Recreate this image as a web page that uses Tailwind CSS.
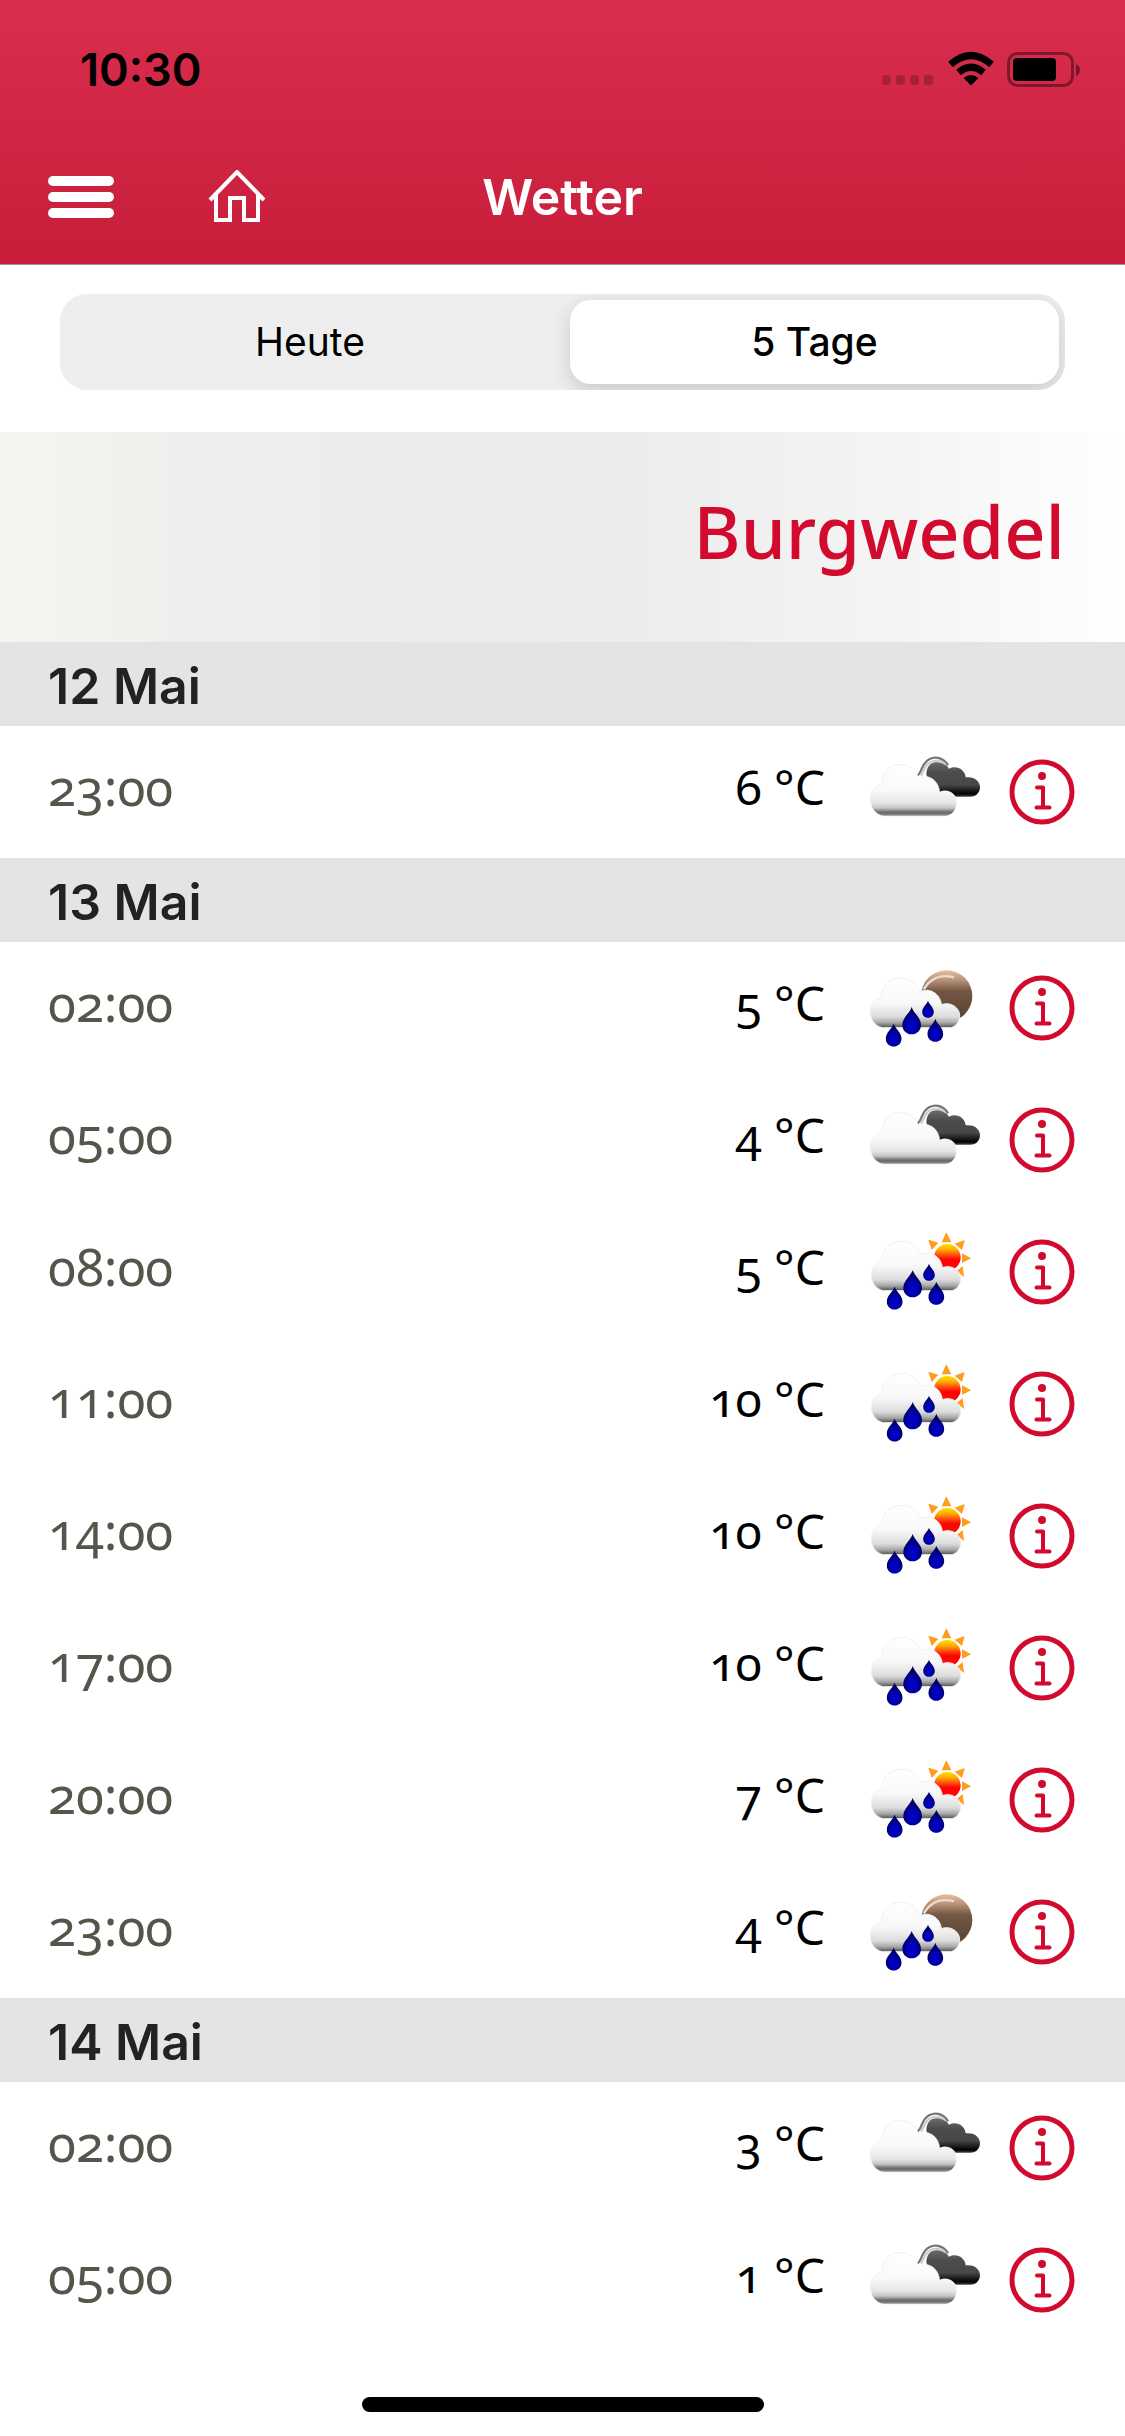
<!DOCTYPE html>
<html lang="de">
<head>
<meta charset="utf-8">
<meta name="viewport" content="width=device-width, initial-scale=1">
<title>Wetter</title>
<script src="https://cdn.jsdelivr.net/npm/@tailwindcss/browser@4"></script>
</head>
<body class="min-h-screen flex flex-col bg-white font-['Inter',sans-serif] text-black">

<!-- Shared symbols -->
<svg class="absolute size-0" aria-hidden="true">
  <defs>
    <linearGradient id="cloudFill" x1="0" y1="0" x2="0" y2="1">
      <stop offset="0" stop-color="#fff"/><stop offset=".5" stop-color="#f9f9f9"/><stop offset=".74" stop-color="#e6e6e6"/><stop offset=".84" stop-color="#c4c4c4"/><stop offset=".92" stop-color="#6a6a6a"/><stop offset=".96" stop-color="#777"/><stop offset="1" stop-color="#c8c8c8"/>
    </linearGradient>
    <linearGradient id="rainCloudFill" x1="0" y1="0" x2="0" y2="1">
      <stop offset="0" stop-color="#fff"/><stop offset=".5" stop-color="#f8f8f8"/><stop offset=".78" stop-color="#dcdcdc"/><stop offset=".9" stop-color="#a8a8a8"/><stop offset="1" stop-color="#505050"/>
    </linearGradient>
    <linearGradient id="darkFill" x1="0" y1="0" x2="0" y2="1">
      <stop offset="0" stop-color="#6a6a6a"/><stop offset=".3" stop-color="#4c4c4c"/><stop offset=".65" stop-color="#484848"/><stop offset=".92" stop-color="#000"/><stop offset="1" stop-color="#444"/>
    </linearGradient>
    <linearGradient id="moonFill" x1="0" y1="0" x2="0" y2="1">
      <stop offset="0" stop-color="#e8c0a0"/><stop offset=".2" stop-color="#b58f76"/><stop offset=".4" stop-color="#735844"/><stop offset="1" stop-color="#54402f"/>
    </linearGradient>
    <linearGradient id="sunFill" x1="0" y1="0" x2="0" y2="1">
      <stop offset="0" stop-color="#ffe000"/><stop offset=".2" stop-color="#ffb000"/><stop offset=".42" stop-color="#ff4a10"/><stop offset=".6" stop-color="#ff0000"/><stop offset="1" stop-color="#ff1010"/>
    </linearGradient>
    <radialGradient id="dropFill" cx=".5" cy=".68" r=".55">
      <stop offset="0" stop-color="#0000d0"/><stop offset=".4" stop-color="#0000b8"/><stop offset="1" stop-color="#00005c"/>
    </radialGradient>
    <path id="drop" d="M0-41C4-24 28-10 28 13C28 30 15 41 0 41S-28 30-28 13C-28-10-4-24 0-41Z" fill="url(#dropFill)"/>
    <g id="rain">
      <path d="M130 213C106 208 92 186 94 160C96 138 112 128 125 125C128 88 150 65 185 65C215 65 236 82 243 105C270 92 304 110 307 144C332 134 360 150 362 175C363 195 350 210 335 213Z" fill="url(#rainCloudFill)" stroke="#f2f2f2" stroke-width="3"/>
      <use href="#drop" x="218" y="192"/>
      <use href="#drop" transform="translate(267 158) scale(.62)"/>
      <use href="#drop" transform="translate(164 235) scale(.84)"/>
      <use href="#drop" transform="translate(289 221) scale(.84)"/>
    </g>
  </defs>
  <symbol id="cloudy" viewBox="72 12 360 288">
    <path d="M262 104C262 78 277 64 297 67C313 69 325 76 330 86C352 75 378 88 380 112C406 108 424 124 423 143C422 160 408 170 394 170L340 170L280 150Z" fill="url(#darkFill)"/>
    <path d="M233 107C252 102 242 72 272 57C294 46 318 58 327 76" fill="none" stroke="#777" stroke-width="7"/>
    <path d="M246 108C256 94 256 72 280 64C296 60 311 66 318 72" fill="none" stroke="#ccc" stroke-width="6"/>
    <path d="M135 229C108 224 91 200 93 170C95 150 112 135 130 130C130 95 153 74 183 74C210 74 228 89 238 112C268 100 300 122 302 156C328 145 355 162 353 190C352 212 338 226 320 229Z" fill="url(#cloudFill)" stroke="#fff" stroke-opacity=".5" stroke-width="3"/>
    <path d="M98 196C86 164 108 138 130 130C130 95 153 74 183 74C210 74 228 89 236 106" fill="none" stroke="#f0f0f0" stroke-width="3"/>
  </symbol>
  <symbol id="rain-night" viewBox="72 30 360 288">
    <circle cx="323" cy="138" r="77" fill="url(#moonFill)"/>
    <path d="M254 118C270 90 300 70 345 82" fill="none" stroke="#ecdccf" stroke-width="7"/>
    <g transform="translate(0 20)"><use href="#rain"/></g>
  </symbol>
  <symbol id="rain-day" viewBox="72 12 360 288">
    <g fill="#ff9c1a">
      <path d="M322 37L337 67L308 67Z"/><path d="M377 60L369 90L347 71Z"/><path d="M396 115L369 129L369 100Z"/><path d="M375 171L353 153L371 138Z"/><path d="M268 59L298 68L278 90Z"/>
    </g>
    <circle cx="325" cy="112" r="40" fill="url(#sunFill)"/>
    <g transform="translate(3 -1)"><use href="#rain"/></g>
  </symbol>
  <symbol id="info" viewBox="0 0 66 66">
    <circle cx="33" cy="33" r="30" fill="none" stroke="#d20a2d" stroke-width="5"/>
    <circle cx="33" cy="17" r="4" fill="#d20a2d"/>
    <path d="M28 28.500H34V48.500M27.500 48.500H40.500" fill="none" stroke="#d20a2d" stroke-width="4" stroke-linecap="round" stroke-linejoin="round"/>
  </symbol>
</svg>

<header class="bg-linear-to-b from-[#d92e4d] via-[#d02544] to-[#c81d3a] border-b border-[#999]">
  <div class="flex h-33 items-center justify-between pl-20 pr-[42px] pt-[6px]">
    <time class="text-[45px] leading-none font-semibold">10:30</time>
    <svg class="h-9 w-[202px]" viewBox="0 0 202 36" aria-label="WLAN verbunden, Akku geladen" role="img">
      <g fill="#000" fill-opacity=".2"><rect x="1" y="24" width="9" height="10" rx="3"/><rect x="15" y="24" width="9" height="10" rx="3"/><rect x="29" y="24" width="9" height="10" rx="3"/><rect x="43" y="24" width="9" height="10" rx="3"/></g>
      <path d="M90 34.500L82.500 27Q90 21 97.500 27Z"/>
      <path d="M77.500 21.500Q90 11 102.500 21.500" fill="none" stroke="#000" stroke-width="7"/>
      <path d="M69.500 13.500Q90-4.500 110.500 13.500" fill="none" stroke="#000" stroke-width="7"/>
      <rect x="127.500" y="2.500" width="64" height="32" rx="9" fill="none" stroke="#000" stroke-opacity=".4" stroke-width="3"/>
      <rect x="132" y="7" width="43" height="23" rx="4"/>
      <path d="M195 13Q199 15 199 19T195 25Z" fill-opacity=".45"/>
    </svg>
  </div>
  <nav class="grid h-33 grid-cols-[1fr_auto_1fr] items-center px-12 pb-[2px]">
    <div class="flex items-center gap-[94px]">
      <button type="button" aria-label="Menü" class="flex w-[66px] flex-col gap-[6px]"><span class="h-[10px] w-full rounded-full bg-white"></span><span class="h-[10px] w-full rounded-full bg-white"></span><span class="h-[10px] w-full rounded-full bg-white"></span></button>
      <a href="#" aria-label="Startseite"><svg class="h-[54px] w-[58px]" viewBox="0 0 58 54" fill="none" stroke="#fff" stroke-width="4"><path d="M2 30L29 2L56 30M8 25V50H22V28H36V50H50V25"/></svg></a>
    </div>
    <h1 class="text-[50px] leading-none font-semibold text-white">Wetter</h1>
  </nav>
</header>

<main>
  <div class="px-15 pt-[29px] pb-[42px]">
    <div class="grid h-24 grid-cols-[1fr_489px] overflow-hidden rounded-[27px] bg-[#eee] p-[6px] text-[39px]" role="group" aria-label="Zeitraum">
      <button type="button" aria-pressed="false" class="pr-4">Heute</button>
      <button type="button" aria-pressed="true" class="rounded-[21px] bg-white font-medium shadow-[0_6px_20px_rgba(0,0,0,0.16)]">5 Tage</button>
    </div>
  </div>

  <div class="flex h-[210px] items-center justify-end bg-[linear-gradient(to_right,#f7f5f0,#f0efed_15%,#ebebe9_42%,#ededed_58%,#f5f5f6_82%,#fff)] px-15 pb-3">
    <h2 class="font-['Noto_Sans',sans-serif] text-[72px] leading-none font-medium text-[#d20a2d]">Burgwedel</h2>
  </div>

  <section>
    <h3 class="flex h-21 items-center bg-[#e4e4e4] px-12 pt-1 text-[50px] font-semibold text-[#222]">12 Mai</h3>
    <ul class="font-['Noto_Sans',sans-serif] text-[48px] oldstyle-nums">
      <li class="flex h-33 items-center pl-12 pr-[50px]"><time class="flex-1 pb-3 text-[51px] text-[#55554b]">23:00</time><span class="pb-[10px]">6 °C</span><svg class="ml-[38px] h-24 w-30" role="img" aria-label="Bewölkt"><use href="#cloudy"/></svg><button type="button" aria-label="Details" class="ml-[26px]"><svg class="size-[66px]"><use href="#info"/></svg></button></li>
    </ul>
  </section>

  <section>
    <h3 class="flex h-21 items-center bg-[#e4e4e4] px-12 pt-1 text-[50px] font-semibold text-[#222]">13 Mai</h3>
    <ul class="font-['Noto_Sans',sans-serif] text-[48px] oldstyle-nums">
      <li class="flex h-33 items-center pl-12 pr-[50px]"><time class="flex-1 pb-3 text-[51px] text-[#55554b]">02:00</time><span class="pb-[10px]">5 °C</span><svg class="ml-[38px] h-24 w-30" role="img" aria-label="Regen, Nacht"><use href="#rain-night"/></svg><button type="button" aria-label="Details" class="ml-[26px]"><svg class="size-[66px]"><use href="#info"/></svg></button></li>
      <li class="flex h-33 items-center pl-12 pr-[50px]"><time class="flex-1 pb-3 text-[51px] text-[#55554b]">05:00</time><span class="pb-[10px]">4 °C</span><svg class="ml-[38px] h-24 w-30" role="img" aria-label="Bewölkt"><use href="#cloudy"/></svg><button type="button" aria-label="Details" class="ml-[26px]"><svg class="size-[66px]"><use href="#info"/></svg></button></li>
      <li class="flex h-33 items-center pl-12 pr-[50px]"><time class="flex-1 pb-3 text-[51px] text-[#55554b]">08:00</time><span class="pb-[10px]">5 °C</span><svg class="ml-[38px] h-24 w-30" role="img" aria-label="Regen und Sonne"><use href="#rain-day"/></svg><button type="button" aria-label="Details" class="ml-[26px]"><svg class="size-[66px]"><use href="#info"/></svg></button></li>
      <li class="flex h-33 items-center pl-12 pr-[50px]"><time class="flex-1 pb-3 text-[51px] text-[#55554b]">11:00</time><span class="pb-[10px]">10 °C</span><svg class="ml-[38px] h-24 w-30" role="img" aria-label="Regen und Sonne"><use href="#rain-day"/></svg><button type="button" aria-label="Details" class="ml-[26px]"><svg class="size-[66px]"><use href="#info"/></svg></button></li>
      <li class="flex h-33 items-center pl-12 pr-[50px]"><time class="flex-1 pb-3 text-[51px] text-[#55554b]">14:00</time><span class="pb-[10px]">10 °C</span><svg class="ml-[38px] h-24 w-30" role="img" aria-label="Regen und Sonne"><use href="#rain-day"/></svg><button type="button" aria-label="Details" class="ml-[26px]"><svg class="size-[66px]"><use href="#info"/></svg></button></li>
      <li class="flex h-33 items-center pl-12 pr-[50px]"><time class="flex-1 pb-3 text-[51px] text-[#55554b]">17:00</time><span class="pb-[10px]">10 °C</span><svg class="ml-[38px] h-24 w-30" role="img" aria-label="Regen und Sonne"><use href="#rain-day"/></svg><button type="button" aria-label="Details" class="ml-[26px]"><svg class="size-[66px]"><use href="#info"/></svg></button></li>
      <li class="flex h-33 items-center pl-12 pr-[50px]"><time class="flex-1 pb-3 text-[51px] text-[#55554b]">20:00</time><span class="pb-[10px]">7 °C</span><svg class="ml-[38px] h-24 w-30" role="img" aria-label="Regen und Sonne"><use href="#rain-day"/></svg><button type="button" aria-label="Details" class="ml-[26px]"><svg class="size-[66px]"><use href="#info"/></svg></button></li>
      <li class="flex h-33 items-center pl-12 pr-[50px]"><time class="flex-1 pb-3 text-[51px] text-[#55554b]">23:00</time><span class="pb-[10px]">4 °C</span><svg class="ml-[38px] h-24 w-30" role="img" aria-label="Regen, Nacht"><use href="#rain-night"/></svg><button type="button" aria-label="Details" class="ml-[26px]"><svg class="size-[66px]"><use href="#info"/></svg></button></li>
    </ul>
  </section>

  <section>
    <h3 class="flex h-21 items-center bg-[#e4e4e4] px-12 pt-1 text-[50px] font-semibold text-[#222]">14 Mai</h3>
    <ul class="font-['Noto_Sans',sans-serif] text-[48px] oldstyle-nums">
      <li class="flex h-33 items-center pl-12 pr-[50px]"><time class="flex-1 pb-3 text-[51px] text-[#55554b]">02:00</time><span class="pb-[10px]">3 °C</span><svg class="ml-[38px] h-24 w-30" role="img" aria-label="Bewölkt"><use href="#cloudy"/></svg><button type="button" aria-label="Details" class="ml-[26px]"><svg class="size-[66px]"><use href="#info"/></svg></button></li>
      <li class="flex h-33 items-center pl-12 pr-[50px]"><time class="flex-1 pb-3 text-[51px] text-[#55554b]">05:00</time><span class="pb-[10px]">1 °C</span><svg class="ml-[38px] h-24 w-30" role="img" aria-label="Bewölkt"><use href="#cloudy"/></svg><button type="button" aria-label="Details" class="ml-[26px]"><svg class="size-[66px]"><use href="#info"/></svg></button></li>
    </ul>
  </section>
</main>

<footer class="mt-auto flex justify-center pt-12 pb-6">
  <div class="h-[15px] w-[402px] rounded-full bg-black"></div>
</footer>
</body>
</html>
